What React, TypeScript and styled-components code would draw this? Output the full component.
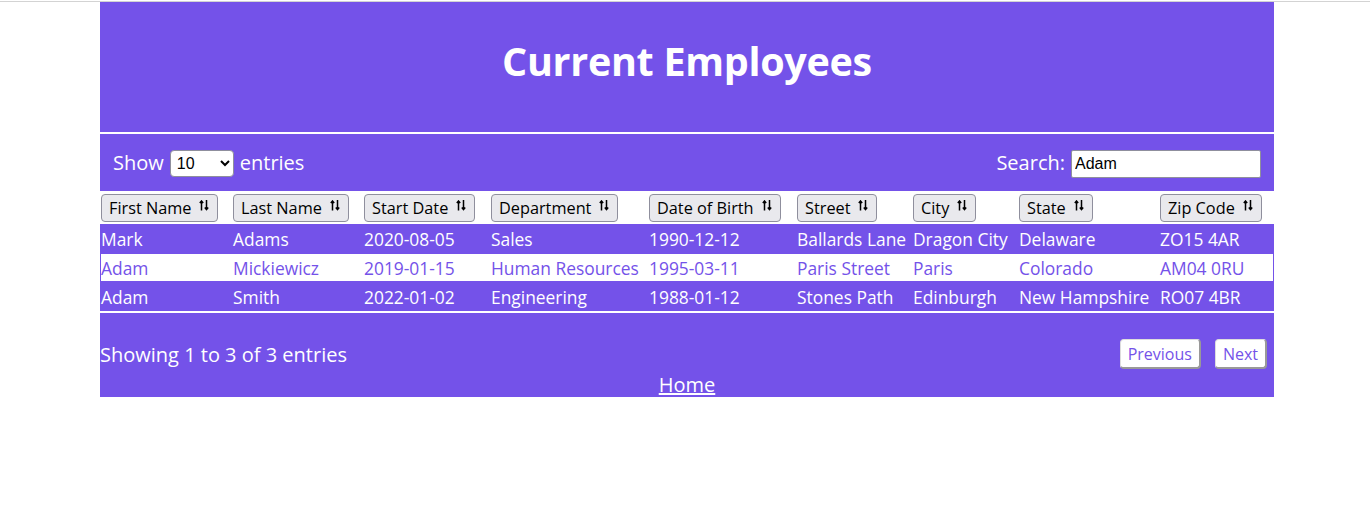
import styled, { createGlobalStyle } from "styled-components";

const purple = "#7452e9";
const font = `"Open Sans", "Noto Sans", sans-serif`;

const GlobalStyle = createGlobalStyle`
  html, body {
    margin: 0;
    padding: 0;
    background: #fff;
  }
  body {
    padding-top: 1px;
    font-family: ${font};
  }
`;

const TopRule = styled.div`
  border-top: 1px solid #d3d3d3;
`;

const Wrapper = styled.div`
  width: 1174px;
  margin-left: 100px;
  background: ${purple};
  color: #fff;
`;

const Header = styled.header`
  height: 130px;
  display: flex;
  justify-content: center;
  align-items: flex-start;
  border-bottom: 2px solid #fff;
`;

const Title = styled.h1`
  margin: 32px 0 0;
  font-size: 39.5px;
  font-weight: 700;
  letter-spacing: -0.3px;
`;

const Toolbar = styled.div`
  height: 57px;
  display: flex;
  align-items: center;
  justify-content: space-between;
  padding: 0 13px;
  font-size: 20px;
`;

const Label = styled.label`
  display: flex;
  align-items: center;
  gap: 6px;
`;

const Select = styled.select`
  width: 64px;
  height: 27px;
  margin-top: 2px;
  font-family: "Liberation Sans", Arial, sans-serif;
  font-size: 16px;
  border: 1px solid #8f8f9d;
  border-radius: 4px;
  background: #fff;
  color: #000;
  padding: 0 2px;
`;

const SearchInput = styled.input`
  width: 190px;
  height: 28px;
  margin-top: 2px;
  box-sizing: border-box;
  font-family: "Liberation Sans", Arial, sans-serif;
  font-size: 16px;
  border: 1px solid #8f8f9d;
  border-radius: 2px;
  padding: 0 3px;
  color: #000;
`;

const Table = styled.table`
  width: 1174px;
  border-collapse: collapse;
  table-layout: fixed;
  font-size: 17.4px;
`;

const HeadRow = styled.tr`
  background: #fff;
  height: 33px;
`;

const Th = styled.th`
  padding: 1px 0 0 1px;
  text-align: left;
  vertical-align: middle;
`;

const SortButton = styled.button`
  display: inline-flex;
  align-items: flex-start;
  gap: 8px;
  height: 28px;
  padding: 2px 8px 0 7px;
  font-family: ${font};
  font-size: 16.3px;
  line-height: 22px;
  color: #000;
  background: #e9e9ed;
  border: 1px solid #8f8f9d;
  border-radius: 4px;
  white-space: nowrap;
`;

const IconWrap = styled.span`
  display: inline-flex;
  margin-top: 3px;
`;

const Row = styled.tr<{ $active?: boolean }>`
  height: 29px;
  background: ${(p) => (p.$active ? "#fff" : purple)};
  color: ${(p) => (p.$active ? purple : "#fff")};
  ${(p) => (p.$active ? `outline: 1px solid ${purple}; outline-offset: -1px;` : "")}
`;

const Td = styled.td`
  padding: 0 1px;
  white-space: nowrap;
  overflow: hidden;
`;

const Footer = styled.div`
  border-top: 2px solid #fff;
  padding-top: 26px;
`;

const FooterRow = styled.div`
  display: flex;
  justify-content: space-between;
  align-items: center;
  font-size: 20px;
  padding-right: 7px;
`;

const Pager = styled.div`
  display: flex;
  gap: 14px;
`;

const PageButton = styled.button`
  height: 30px;
  padding: 0 7px;
  font-family: ${font};
  font-size: 16px;
  color: ${purple};
  background: #fff;
  border: 1px solid #ddd;
  border-right: 2px solid #999;
  border-bottom: 2px solid #999;
  border-radius: 4px;
`;

const HomeLine = styled.div`
  text-align: center;
  padding: 3px 0 0;
  font-size: 20px;
  line-height: 25px;
`;

const HomeLink = styled.a`
  color: #fff;
  text-decoration: underline;
`;

const SortIcon = () => (
  <svg width="10" height="11" viewBox="0 0 10 11" fill="none" stroke="#000" strokeWidth="1.5">
    <path d="M2.5 10.5V1M0.8 3L2.5 1 4.2 3" />
    <path d="M7.5 0V9.5M5.8 7.5L7.5 9.5 9.2 7.5" />
  </svg>
);

const columns = [
  { label: "First Name", width: 132 },
  { label: "Last Name", width: 131 },
  { label: "Start Date", width: 127 },
  { label: "Department", width: 158 },
  { label: "Date of Birth", width: 148 },
  { label: "Street", width: 116 },
  { label: "City", width: 106 },
  { label: "State", width: 141 },
  { label: "Zip Code", width: 115 },
];

const employees = [
  ["Mark", "Adams", "2020-08-05", "Sales", "1990-12-12", "Ballards Lane", "Dragon City", "Delaware", "ZO15 4AR"],
  ["Adam", "Mickiewicz", "2019-01-15", "Human Resources", "1995-03-11", "Paris Street", "Paris", "Colorado", "AM04 0RU"],
  ["Adam", "Smith", "2022-01-02", "Engineering", "1988-01-12", "Stones Path", "Edinburgh", "New Hampshire", "RO07 4BR"],
];

export default function App() {
  return (
    <>
      <GlobalStyle />
      <TopRule />
      <Wrapper>
        <Header>
          <Title>Current Employees</Title>
        </Header>
        <Toolbar>
          <Label>
            Show
            <Select defaultValue="10">
              <option>10</option>
              <option>25</option>
              <option>50</option>
              <option>100</option>
            </Select>
            entries
          </Label>
          <Label>
            Search:
            <SearchInput defaultValue="Adam" />
          </Label>
        </Toolbar>
        <Table>
          <colgroup>
            {columns.map((c) => (
              <col key={c.label} style={{ width: c.width }} />
            ))}
          </colgroup>
          <thead>
            <HeadRow>
              {columns.map((c) => (
                <Th key={c.label}>
                  <SortButton>
                    {c.label}
                    <IconWrap>
                      <SortIcon />
                    </IconWrap>
                  </SortButton>
                </Th>
              ))}
            </HeadRow>
          </thead>
          <tbody>
            {employees.map((e, i) => (
              <Row key={i} $active={i === 1}>
                {e.map((v, j) => (
                  <Td key={j}>{v}</Td>
                ))}
              </Row>
            ))}
          </tbody>
        </Table>
        <Footer>
          <FooterRow>
            <span>Showing 1 to 3 of 3 entries</span>
            <Pager>
              <PageButton>Previous</PageButton>
              <PageButton>Next</PageButton>
            </Pager>
          </FooterRow>
          <HomeLine>
            <HomeLink href="#">Home</HomeLink>
          </HomeLine>
        </Footer>
      </Wrapper>
    </>
  );
}
